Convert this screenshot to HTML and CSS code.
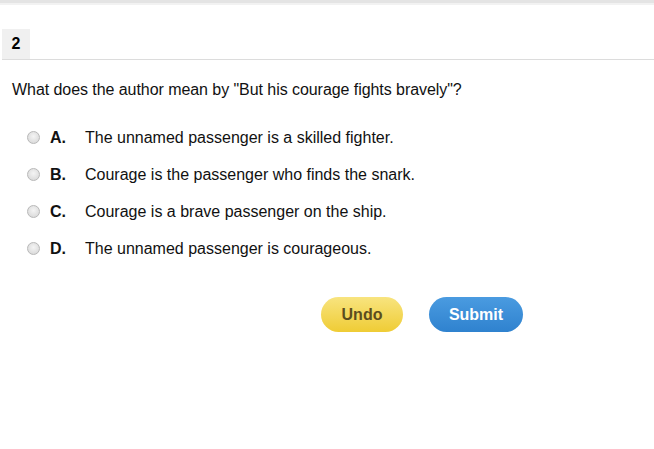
FILE: index.html
```html
<!DOCTYPE html>
<html>
<head>
<meta charset="utf-8">
<link rel="stylesheet" href="styles.css">
</head>
<body>
<div class="topbar"></div>
<div class="qhead"><span class="qnum">2</span></div>
<p class="question">What does the author mean by "But his courage fights bravely"?</p>
<ul class="options">
  <li class="option"><span class="radio"></span><span class="letter">A.</span><span class="text">The unnamed passenger is a skilled fighter.</span></li>
  <li class="option"><span class="radio"></span><span class="letter">B.</span><span class="text">Courage is the passenger who finds the snark.</span></li>
  <li class="option"><span class="radio"></span><span class="letter">C.</span><span class="text">Courage is a brave passenger on the ship.</span></li>
  <li class="option"><span class="radio"></span><span class="letter">D.</span><span class="text">The unnamed passenger is courageous.</span></li>
</ul>
<div class="actions">
  <button class="btn undo">Undo</button>
  <button class="btn submit">Submit</button>
</div>
</body>
</html>
```

FILE: styles.css
```css
html, body {
  margin: 0;
  padding: 0;
  background: #fff;
  font-family: "Liberation Sans", Arial, sans-serif;
  color: #111;
}
.topbar {
  height: 3px;
  background: #e4e4e4;
  border-bottom: 2px solid #f2f2f2;
}
.qhead {
  margin: 24px 0 0 2px;
  border-bottom: 1px solid #dcdcdc;
  display: flex;
}
.qnum {
  display: block;
  width: 28px;
  height: 30px;
  line-height: 30px;
  text-align: center;
  background: #f0f0f0;
  font-weight: bold;
  font-size: 16px;
  color: #000;
}
.question {
  margin: 21px 0 0 12px;
  font-size: 16px;
  letter-spacing: -0.06px;
  line-height: 18px;
}
.options {
  list-style: none;
  margin: 20px 0 0 0;
  padding: 0 0 0 27px;
}
.option {
  display: flex;
  align-items: center;
  height: 37px;
  font-size: 16px;
}
.radio {
  width: 11px;
  height: 11px;
  border-radius: 50%;
  border: 1px solid #b8b8b8;
  background: radial-gradient(circle at 50% 40%, #f4f4f4, #d4d4d4);
  margin-right: 10px;
  flex: none;
}
.letter {
  font-weight: bold;
  width: 35px;
}
.actions {
  display: flex;
  gap: 26px;
  margin: 30px 0 0 321px;
}
.btn {
  height: 35px;
  border: none;
  border-radius: 18px;
  font-family: "Liberation Sans", Arial, sans-serif;
  font-weight: bold;
  font-size: 16px;
  padding: 0;
}
.undo {
  width: 82px;
  background: linear-gradient(#f8e47f, #efcc35);
  color: #5b4d1e;
}
.submit {
  width: 94px;
  background: linear-gradient(#4a9be0, #2f82cf);
  color: #fff;
}
```
